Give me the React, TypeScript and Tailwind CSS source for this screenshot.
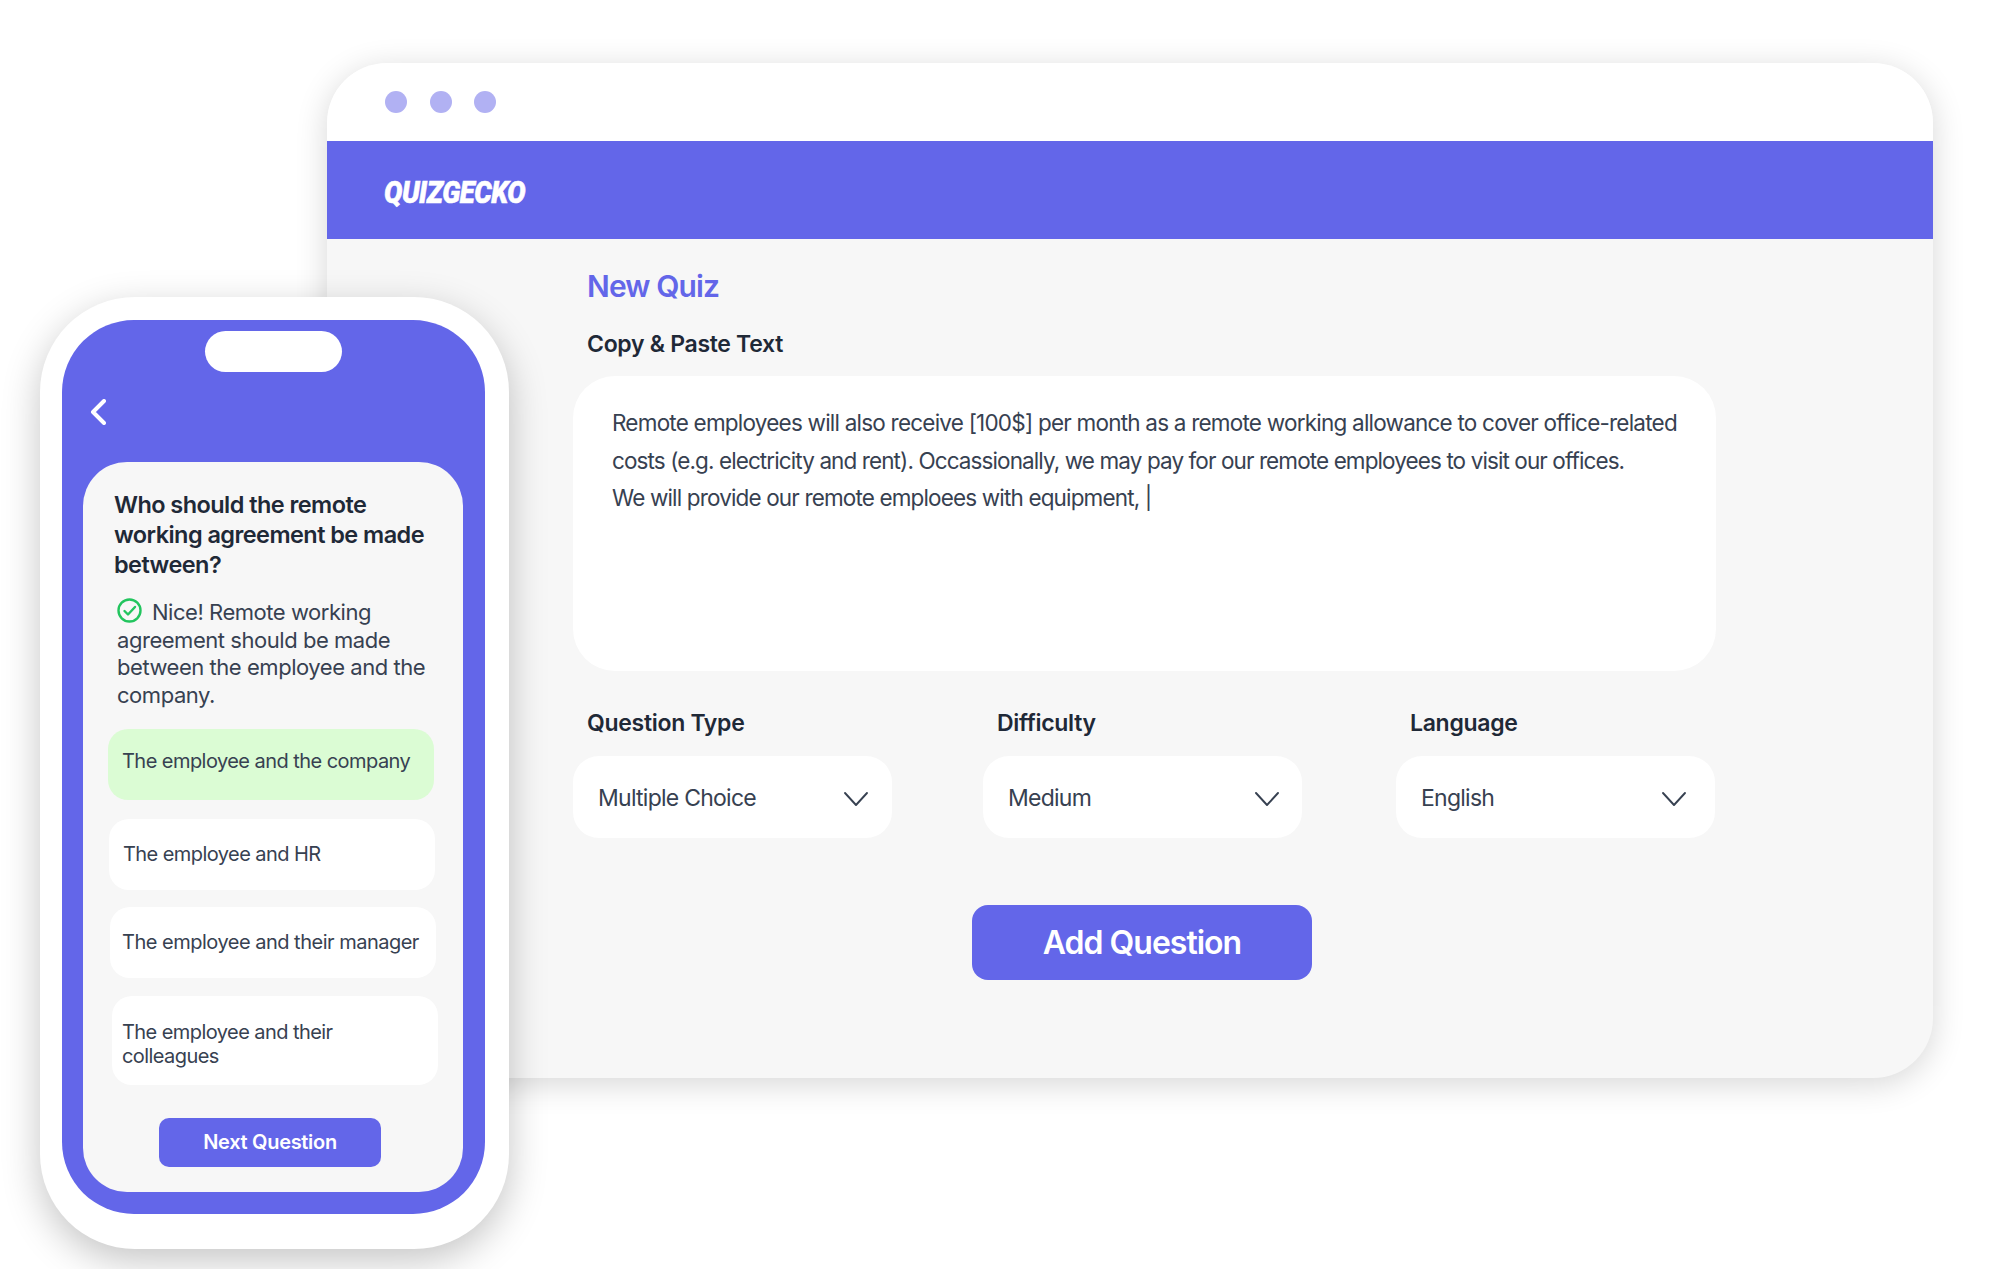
import React from 'react';

const selects = [
  { label: 'Question Type', value: 'Multiple Choice', wrap: 'w-[319px]', box: 'pr-[23px]' },
  { label: 'Difficulty', value: 'Medium', wrap: 'w-[319px] ml-[91px]', box: 'pr-[22px]' },
  { label: 'Language', value: 'English', wrap: 'w-[319px] ml-[94px]', box: 'pr-[28px]' },
];

const options = [
  { text: 'The employee and HR', cls: 'ml-[26px] mt-[19px] h-[71px] whitespace-nowrap pl-[14px] tracking-[-0.57px]' },
  { text: 'The employee and their manager', cls: 'ml-[27px] mt-[17px] h-[71px] whitespace-nowrap pl-[12px] tracking-[-0.5px]' },
  { text: 'The employee and their colleagues', cls: 'ml-[29px] mt-[18px] h-[89px] pl-[10px] pt-[7px] tracking-[-0.57px]' },
];

const Chevron = () => (
  <svg className="mt-[3px]" width="26" height="16" viewBox="0 0 26 16" fill="none" stroke="#374151" strokeWidth="1.9" strokeLinecap="round" strokeLinejoin="round">
    <path d="M2 2l11 12L24 2" />
  </svg>
);

const Phone = () => (
  <div className="absolute left-[40px] top-[297px] w-[469px] h-[952px] rounded-[95px] bg-white pl-[22px] pt-[23px] shadow-[0_12px_38px_rgba(0,0,0,0.23)]">
    <div className="h-[894px] w-[423px] rounded-[72px] bg-[#6366E9] pt-[11px]">
      <div className="mx-auto h-[41px] w-[137px] rounded-full bg-white" />
      <svg className="ml-[28px] mt-[27px]" width="16" height="26" viewBox="0 0 16 26" fill="none" stroke="#fff" strokeWidth="4" strokeLinecap="round" strokeLinejoin="round">
        <path d="M14 2L3 13l11 11" />
      </svg>
      <div className="ml-[21px] mt-[37px] h-[730px] w-[380px] rounded-[44px] bg-[#F7F7F7] pt-[28px]">
        <h2 className="ml-[31px] w-[330px] text-[23.5px] font-semibold leading-[30px] tracking-[-0.56px] text-[#1F2937]">
          Who should the remote working agreement be made between?
        </h2>
        <p className="ml-[34px] mt-[18px] w-[325px] text-[22px] leading-[27.7px] tracking-[-0.46px] text-[#374151]">
          <svg className="mr-[10px] inline-block align-[-3px]" width="25" height="25" viewBox="0 0 25 25" fill="none" stroke="#22C55E" strokeWidth="2.4" strokeLinecap="round" strokeLinejoin="round">
            <circle cx="12.5" cy="12.5" r="11" />
            <path d="M7.5 13l3.5 3.5 7-7.5" />
          </svg>
          Nice! Remote working agreement should be made between the employee and the company.
        </p>
        <div className="ml-[25px] mt-[19px] h-[71px] w-[326px] whitespace-nowrap rounded-[20px] bg-[#DBFCD4] pl-[14px] pt-[20px] text-[20px] leading-[25px] tracking-[-0.55px] text-[#374151]">
          The employee and the company
        </div>
        {options.map((o) => (
          <div key={o.text} className={`${o.cls} flex w-[326px] items-center rounded-[20px] bg-white pr-[60px] text-[20px] leading-[24px] text-[#374151]`}>
            {o.text}
          </div>
        ))}
        <button className="ml-[76px] mt-[33px] h-[49px] w-[222px] rounded-[10px] bg-[#6366E9] text-[20px] font-semibold tracking-[-0.3px] text-white">
          Next Question
        </button>
      </div>
    </div>
  </div>
);

export default function App() {
  return (
    <div className="relative h-[1269px] w-[2000px] overflow-hidden bg-white pl-[327px] pt-[63px] font-['Inter',sans-serif]">
      <div className="h-[1015px] w-[1606px] overflow-hidden rounded-[60px] bg-[#F7F7F7] shadow-[0_6px_32px_rgba(0,0,0,0.16)]">
        <div className="flex h-[78px] items-center gap-[22.5px] bg-white pl-[58px]">
          <span className="h-[22px] w-[22px] rounded-full bg-[#B1B1F3]" />
          <span className="h-[22px] w-[22px] rounded-full bg-[#B1B1F3]" />
          <span className="h-[22px] w-[22px] rounded-full bg-[#B1B1F3]" />
        </div>
        <div className="flex h-[98px] items-center bg-[#6366E9] pl-[57px] pt-[3px]">
          <span className="origin-left scale-x-[0.855] font-['Roboto',sans-serif] text-[32px] font-black italic tracking-[-0.5px] text-white [-webkit-text-stroke:0.6px_white]">QUIZGECKO</span>
        </div>
        <div className="pl-[246px] pt-[29px]">
          <h1 className="ml-[14px] text-[30px] font-semibold leading-[36px] tracking-[-0.9px] text-[#6366E9]">New Quiz</h1>
          <div className="ml-[14px] mt-[26px] text-[23px] font-semibold leading-[28px] tracking-[-0.3px] text-[#1F2937]">Copy &amp; Paste Text</div>
          <div className="mt-[18px] h-[295px] w-[1143px] whitespace-nowrap rounded-[42px] bg-white px-[39px] pt-[28px] text-[22.5px] leading-[37.5px] text-[#374151]">
            <div className="tracking-[-0.78px]">Remote employees will also receive [100$] per month as a remote working allowance to cover office-related</div>
            <div className="tracking-[-0.9px]">costs (e.g. electricity and rent). Occassionally, we may pay for our remote employees to visit our offices.</div>
            <div className="tracking-[-0.85px]">We will provide our remote emploees with equipment, |</div>
          </div>
          <div className="mt-[38px] flex">
            {selects.map((s) => (
              <div key={s.label} className={s.wrap}>
                <div className="ml-[14px] text-[23px] font-semibold leading-[28px] tracking-[-0.3px] text-[#1F2937]">{s.label}</div>
                <div className={`${s.box} mt-[19px] flex h-[82px] items-center justify-between rounded-[26px] bg-white pl-[25px] text-[23px] tracking-[-0.75px] text-[#374151]`}>
                  <span className="pt-[2px]">{s.value}</span>
                  <Chevron />
                </div>
              </div>
            ))}
          </div>
          <button className="ml-[399px] mt-[67px] h-[75px] w-[340px] rounded-[16px] bg-[#6366E9] text-[32px] font-semibold tracking-[-1px] text-white">
            Add Question
          </button>
        </div>
      </div>
      <Phone />
    </div>
  );
}
